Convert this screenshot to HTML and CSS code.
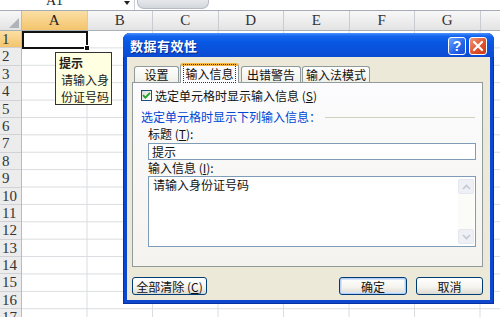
FILE: index.html
```html
<!DOCTYPE html>
<html lang="zh-CN">
<head>
<meta charset="UTF-8">
<title>数据有效性</title>

<link rel="stylesheet" href="styles.css">

</head>
<body>
<div class="sheet">
    <div class="formula-bar">
        <div class="name-box">
            <span class="name">A1</span>
            <span class="drop"></span>
        </div>
        <div class="fx-box"><span class="fx">fx</span></div>
    </div>

    <div class="col-heads">
        <div class="corner"><span class="corner-mark"></span></div>
        <div class="col-head selected">A</div>
        <div class="col-head">B</div>
        <div class="col-head">C</div>
        <div class="col-head">D</div>
        <div class="col-head">E</div>
        <div class="col-head">F</div>
        <div class="col-head">G</div>
        <div class="col-head"></div>
    </div>

    <div class="grid-body">
        <div class="row-heads">
            <div class="row-head selected">1</div>
            <div class="row-head">2</div>
            <div class="row-head">3</div>
            <div class="row-head">4</div>
            <div class="row-head">5</div>
            <div class="row-head">6</div>
            <div class="row-head">7</div>
            <div class="row-head">8</div>
            <div class="row-head">9</div>
            <div class="row-head">10</div>
            <div class="row-head">11</div>
            <div class="row-head">12</div>
            <div class="row-head">13</div>
            <div class="row-head">14</div>
            <div class="row-head">15</div>
            <div class="row-head">16</div>
            <div class="row-head">17</div>
        </div>
        <div class="cells">
            <div class="active-cell"><span class="fill-handle"></span></div>
        </div>
    </div>

    <!-- input message shown next to A1 -->
    <div class="input-tip">
        <div class="tip-title">提示</div>
        <div class="tip-text">请输入身<br>份证号码</div>
    </div>

    <div class="dialog">
        <div class="title-bar">
            <span class="title">数据有效性</span>
            <div class="title-buttons">
                <span class="tb-btn help">?</span>
                <span class="tb-btn close">
                    <svg width="12" height="12" viewBox="0 0 12 12"><path d="M2 2 L10 10 M10 2 L2 10" stroke="#fff" stroke-width="2.2" stroke-linecap="round"/></svg>
                </span>
            </div>
        </div>

        <div class="dialog-body">
            <div class="tabs">
                <div class="tab tab-settings">设置</div>
                <div class="tab active tab-input"><span class="focus">输入信息</span></div>
                <div class="tab tab-error">出错警告</div>
                <div class="tab tab-ime">输入法模式</div>
            </div>

            <div class="tab-panel">
                <div class="check-row">
                    <span class="checkbox">
                        <svg width="9" height="9" viewBox="0 0 9 9"><path d="M1 4.2 L3.4 6.6 L8 1.8" fill="none" stroke="#21a121" stroke-width="1.8"/></svg>
                    </span>
                    <span>选定单元格时显示输入信息 (<u>S</u>)</span>
                </div>

                <div class="group-label"><span>选定单元格时显示下列输入信息：</span></div>

                <div class="fields">
                    <div class="field-label">标题 (<u>T</u>):</div>
                    <div class="text-input">提示</div>
                    <div class="field-label">输入信息 (<u>I</u>):</div>
                    <div class="text-area">
                        <div class="text-area-content">请输入身份证号码</div>
                        <div class="scrollbar">
                            <span class="scroll-btn">
                                <svg width="9" height="6" viewBox="0 0 9 6"><path d="M1 5 L4.5 1.5 L8 5" fill="none" stroke="#c3c8d6" stroke-width="1.6"/></svg>
                            </span>
                            <span class="scroll-track"></span>
                            <span class="scroll-btn">
                                <svg width="9" height="6" viewBox="0 0 9 6"><path d="M1 1 L4.5 4.5 L8 1" fill="none" stroke="#c3c8d6" stroke-width="1.6"/></svg>
                            </span>
                        </div>
                    </div>
                </div>
            </div>

            <div class="button-row">
                <button type="button" class="btn btn-clear">全部清除 (<u>C</u>)</button>
                <span class="spacer"></span>
                <button type="button" class="btn btn-ok">确定</button>
                <button type="button" class="btn btn-cancel">取消</button>
            </div>
        </div>
    </div>
</div>
</body>
</html>
```

FILE: styles.css
```css
body {
    margin: 0;
    width: 500px;
    height: 317px;
    overflow: hidden;
    background-color: #fff;
    font-family: "Noto Sans CJK SC", "Liberation Sans", sans-serif;
}

.sheet {
    position: relative;
    width: 500px;
    height: 317px;
    overflow: hidden;
}

/* formula bar, mostly cut off at the top */
.formula-bar {
    display: flex;
    height: 10px;
    border-bottom: 1px solid #a5acb5;
    overflow: hidden;
}

.name-box {
    display: flex;
    width: 134px;
    border-right: 1px solid #c9ced6;
}

.name {
    margin: -6px 0 0 46px;
    font: 14px/14px "Liberation Serif", serif;
    color: #222;
}

.drop {
    margin: 1px 0 0 auto;
    margin-right: 4px;
    width: 0;
    height: 0;
    border-left: 3px solid transparent;
    border-right: 3px solid transparent;
    border-top: 4px solid #222;
}

.fx-box {
    width: 70px;
    height: 8px;
    margin-left: 2px;
    background: linear-gradient(#e6e8eb, #d3d7dc);
    border: 1px solid #b5bac3;
    border-top: none;
    border-radius: 0 0 7px 7px;
    text-align: right;
}

.fx {
    display: inline-block;
    margin: -5px 6px 0 0;
    font: italic 11px/11px "Liberation Serif", serif;
    color: #555;
}

/* column headers */
.col-heads {
    display: flex;
    height: 19px;
    border-bottom: 1px solid #a8b0b8;
    background: linear-gradient(#f8f8f8, #e3e3e3);
}

.corner {
    position: relative;
    flex: 0 0 22px;
    box-sizing: border-box;
    border-right: 1px solid #b5bcc4;
}

.corner-mark {
    position: absolute;
    right: 2px;
    bottom: 2px;
    width: 0;
    height: 0;
    border-left: 10px solid transparent;
    border-bottom: 10px solid #b0b4b8;
}

.col-head {
    flex: 0 0 65.5px;
    box-sizing: border-box;
    border-right: 1px solid #c8ccd1;
    text-align: center;
    font: 15px/19px "Liberation Serif", serif;
    color: #333;
}

.col-head.selected {
    background: linear-gradient(#fbdfa5, #f3c46c);
    color: #222;
}

/* rows */
.grid-body {
    display: flex;
}

.row-heads {
    flex: 0 0 22px;
    box-sizing: border-box;
    border-right: 1px solid #b5bcc4;
    background-color: #ececec;
}

.row-head {
    height: 17.4px;
    box-sizing: border-box;
    border-bottom: 1px solid #cfd2d6;
    padding-left: 2px;
    font: 15px/17px "Liberation Serif", serif;
    color: #333;
}

.row-head.selected {
    background: linear-gradient(#fbdfa5, #f3c46c);
}

.cells {
    flex: 1;
    height: 296px;
    background-color: #fff;
    background-image: linear-gradient(to right, #dadcdf 1px, transparent 1px), linear-gradient(#dadcdf 1px, transparent 1px);
    background-size: 65.5px 100%, 100% 17.4px;
    background-position: 64.5px 0, 0 16.4px;
}

.active-cell {
    position: relative;
    width: 66px;
    height: 18px;
    box-sizing: border-box;
    border: 2px solid #111;
}

.fill-handle {
    position: absolute;
    right: -4px;
    bottom: -4px;
    width: 4px;
    height: 4px;
    background-color: #111;
    border: 1px solid #fff;
}

/* input message tooltip */
.input-tip {
    position: absolute;
    left: 55px;
    top: 52px;
    width: 57px;
    height: 53px;
    box-sizing: border-box;
    border: 1px solid #333;
    background-color: #ffffe1;
    padding: 1px 0 0 3px;
    font-size: 12px;
    line-height: 17px;
    color: #222;
}

.tip-title {
    font-weight: bold;
}

.tip-text {
    padding-left: 2px;
}

/* dialog */
.dialog {
    position: absolute;
    left: 123px;
    top: 33px;
    width: 371px;
    height: 271px;
    display: flex;
    flex-direction: column;
    background-color: #0b47cf;
    border-radius: 7px 7px 0 0;
    box-shadow: inset 1px 0 0 #0832a4, inset -1px 0 0 #0832a4, inset 0 -1px 0 #0832a4;
}

.title-bar {
    display: flex;
    align-items: center;
    height: 24px;
    padding: 0 7px;
    border-radius: 7px 7px 0 0;
    background: linear-gradient(#4a93ff 0, #1565ee 3px, #0758e4 9px, #0a52dc 16px, #0b4bd2 24px);
    color: #fff;
}

.title {
    font-size: 13px;
    font-weight: bold;
    letter-spacing: 0.5px;
    text-shadow: 1px 1px 0 #0c2a8a;
}

.title-buttons {
    display: flex;
    gap: 3px;
    margin: 2px 0 0 auto;
}

.tb-btn {
    display: flex;
    align-items: center;
    justify-content: center;
    width: 18px;
    height: 18px;
    box-sizing: border-box;
    border: 1px solid #fff;
    border-radius: 3px;
}

.help {
    background: linear-gradient(135deg, #6ea6ff, #2363e8 60%, #1a4fd0);
    font: bold 14px/16px "Liberation Sans", sans-serif;
    color: #fff;
}

.close {
    background: linear-gradient(135deg, #f19a7a, #e0532d 55%, #c83a16);
}

.dialog-body {
    flex: 1;
    display: flex;
    flex-direction: column;
    margin: 0 4px 4px 4px;
    padding: 6px 7px 0 5px;
    background-color: #ece9d8;
}

/* tabs */
.tabs {
    display: flex;
    align-items: flex-end;
    height: 19px;
    padding-left: 2px;
}

.tab {
    height: 16px;
    box-sizing: border-box;
    border: 1px solid #919b9c;
    border-bottom: none;
    border-radius: 3px 3px 0 0;
    background: linear-gradient(#fefefe, #f0f0ea);
    text-align: center;
    font-size: 12px;
    line-height: 15px;
    color: #111;
}

.tab-settings {
    width: 45px;
}

.tab-input {
    width: 59px;
}

.tab-error {
    width: 60px;
    margin-left: 2px;
}

.tab-ime {
    width: 68px;
    margin-left: 1px;
}

.tab.active {
    position: relative;
    z-index: 1;
    height: 20px;
    margin-bottom: -1px;
    margin-left: 1px;
    border-top: 3px solid #f5b53a;
    background: #fcfcfe;
    line-height: 15px;
}

.focus {
    padding: 0 1px;
    outline: 1px dotted #333;
}

.tab-panel {
    height: 185px;
    box-sizing: border-box;
    border: 1px solid #919b9c;
    background: linear-gradient(#fcfcfe, #f4f3ee);
    padding: 6px 6px 0 8px;
    font-size: 12px;
    color: #111;
}

.check-row {
    display: flex;
    align-items: center;
    gap: 3px;
    height: 13px;
    line-height: 13px;
}

.checkbox {
    display: flex;
    align-items: center;
    justify-content: center;
    width: 11px;
    height: 11px;
    box-sizing: border-box;
    border: 1px solid #1c5180;
    background: linear-gradient(135deg, #dcdcd7, #fff);
}

.group-label {
    display: flex;
    align-items: center;
    margin-top: 8px;
    height: 14px;
    line-height: 14px;
    color: #0046d5;
}

.group-label::after {
    content: "";
    flex: 1;
    margin: 1px 1px 0 4px;
    border-top: 1px solid #d0d0bf;
}

.fields {
    margin-left: 7px;
}

.field-label {
    height: 14px;
    line-height: 14px;
    margin-top: 3px;
}

.text-input {
    height: 17px;
    box-sizing: border-box;
    margin-top: 2px;
    border: 1px solid #7f9db9;
    background-color: #fff;
    padding-left: 3px;
    line-height: 15px;
}

.text-input + .field-label {
    margin-top: 1px;
}

.text-area {
    display: flex;
    height: 71px;
    box-sizing: border-box;
    margin-top: 1px;
    border: 1px solid #7f9db9;
    background-color: #fff;
}

.text-area-content {
    flex: 1;
    padding: 1px 0 0 4px;
    line-height: 14px;
}

.scrollbar {
    display: flex;
    flex-direction: column;
    width: 16px;
    margin: 2px 1px 2px 0;
}

.scroll-btn {
    display: flex;
    align-items: center;
    justify-content: center;
    height: 15px;
    box-sizing: border-box;
    border: 1px solid #e4e7ef;
    border-radius: 2px;
    background-color: #eef0f6;
}

.scroll-track {
    flex: 1;
    background-color: #fbfbf8;
}

/* bottom buttons */
.button-row {
    display: flex;
    margin-top: 10px;
}

.spacer {
    flex: 1;
}

.btn {
    height: 18px;
    padding: 0;
    box-sizing: border-box;
    border: 1px solid #003c74;
    border-radius: 3px;
    background: linear-gradient(#fff, #f5f4ef 55%, #dcdad0);
    font-family: "Noto Sans CJK SC", sans-serif;
    font-size: 12px;
    line-height: 15px;
    color: #111;
}

.btn-clear {
    width: 75px;
}

.btn-ok {
    width: 68px;
    box-shadow: inset 0 0 0 1px #b4cdf5, inset 0 0 0 2px #d6e4fa;
}

.btn-cancel {
    width: 67px;
    margin-left: 9px;
}
```
